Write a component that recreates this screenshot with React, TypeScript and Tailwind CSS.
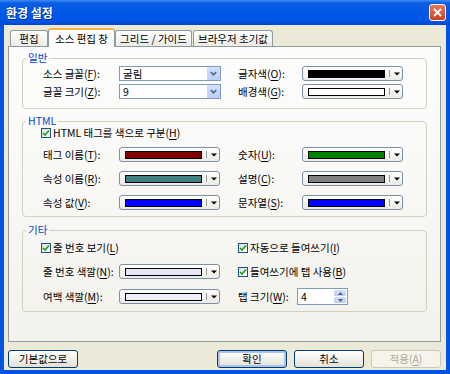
import React from "react";

const U = ({ children }: { children: React.ReactNode }) => (
  <span className="underline underline-offset-[1.5px]">{children}</span>
);

function CheckBox() {
  return (
    <span className="w-[10px] h-[10px] shrink-0 border border-[#1c5180] bg-linear-to-br from-[#dcdcd7] to-white flex items-center justify-center">
      <svg width="8" height="8" viewBox="0 0 8 8">
        <path d="M1 4 L3 6 L7 1.5" stroke="#21a121" strokeWidth="1.7" fill="none" />
      </svg>
    </span>
  );
}

function FontCombo({ value }: { value: string }) {
  return (
    <div className="w-[102px] h-[15px] shrink-0 border border-[#7f9db9] bg-white flex items-center">
      <span className="flex-1 pl-[3px] leading-[12px]">{value}</span>
      <span className="w-[13px] h-[13px] bg-linear-to-b from-[#d4e0fc] to-[#b9cdf8] rounded-[1px] flex items-center justify-center">
        <svg width="7" height="5" viewBox="0 0 7 5">
          <path d="M0.8 1 L3.5 3.8 L6.2 1" stroke="#4d6185" strokeWidth="1.6" fill="none" />
        </svg>
      </span>
    </div>
  );
}

function ColorCombo({ swatch }: { swatch: string }) {
  return (
    <div className="w-[101px] h-[15px] shrink-0 rounded-[3px] border border-[#7b8fa8] bg-linear-to-b from-white to-[#ecebe6] flex items-center pl-[5px]">
      <span className={"w-[77px] h-[8px] border border-black " + swatch} />
      <span className="ml-[4px] w-px h-[7px] bg-[#9a9a9a]" />
      <svg className="ml-[4px]" width="6" height="4" viewBox="0 0 6 4">
        <path d="M0 0.5H6L3 3.5Z" fill="#000" />
      </svg>
    </div>
  );
}

function Spinner() {
  return (
    <div className="w-[51px] h-[17px] shrink-0 border border-[#7f9db9] bg-white flex">
      <span className="flex-1 pl-[3px] flex items-center">4</span>
      <div className="w-[14px] flex flex-col gap-px p-px">
        <span className="flex-1 rounded-[1px] bg-linear-to-b from-[#d4e0fc] to-[#b9cdf8] flex items-center justify-center">
          <svg width="5" height="3" viewBox="0 0 5 3">
            <path d="M0 3H5L2.5 0Z" fill="#4d6185" />
          </svg>
        </span>
        <span className="flex-1 rounded-[1px] bg-linear-to-b from-[#d4e0fc] to-[#b9cdf8] flex items-center justify-center">
          <svg width="5" height="3" viewBox="0 0 5 3">
            <path d="M0 0H5L2.5 3Z" fill="#4d6185" />
          </svg>
        </span>
      </div>
    </div>
  );
}

function Btn({
  children,
  kind,
}: {
  children: React.ReactNode;
  kind?: "default" | "disabled";
}) {
  if (kind === "disabled") {
    return (
      <div className="w-[70px] h-[18px] rounded-[3px] border border-[#c9c7ba] bg-[#f5f4ea] text-[#aca899] flex items-center justify-center">
        {children}
      </div>
    );
  }
  return (
    <div
      className={
        "w-[70px] h-[18px] rounded-[3px] border border-[#003c74] bg-linear-to-b from-white to-[#e3e1d6] flex items-center justify-center " +
        (kind === "default" ? "shadow-[inset_0_0_0_2px_#a9c3ef]" : "")
      }
    >
      {children}
    </div>
  );
}

export default function App() {
  return (
    <div className="w-[450px] h-[374px] bg-[#0054e3] flex flex-col font-['Noto_Sans_CJK_KR','Noto_Sans',sans-serif] text-[10.5px] leading-[12px] text-black overflow-hidden">
      {/* title bar */}
      <div className="h-[25px] shrink-0 flex items-center justify-between pl-[6px] pr-[4px] bg-[linear-gradient(180deg,#3d8bf5_0%,#0b5ee0_12%,#0058e8_50%,#0054e6_85%,#0047cc_100%)]">
        <span className="text-white font-bold text-[12px] leading-[14px] [text-shadow:1px_1px_0_#0a2f9a]">
          환경 설정
        </span>
        <div className="w-[17px] h-[17px] rounded-[3px] border border-white bg-linear-to-b from-[#e8785a] to-[#c8401f] flex items-center justify-center">
          <svg width="9" height="9" viewBox="0 0 9 9">
            <path d="M1 1 L8 8 M8 1 L1 8" stroke="#fff" strokeWidth="1.8" />
          </svg>
        </div>
      </div>

      {/* body */}
      <div className="flex-1 mx-[4px] mb-[4px] bg-[#ece9d8] flex flex-col pl-[4px] pr-[5px] pt-[3px] pb-[2px]">
        {/* tabs */}
        <div className="flex items-end h-[19px] -mb-px pl-[2px] relative z-10">
          <div className="w-[38px] h-[16px] mb-px border border-b-0 border-[#919b9c] rounded-t-[3px] bg-linear-to-b from-white to-[#ecebe5] flex items-center justify-center">
            편집
          </div>
          <div className="w-[67px] h-[19px] border-x border-[#919b9c] border-t-2 border-t-[#f8b33a] rounded-t-[3px] bg-[#fdfdfd] flex items-center justify-center">
            소스 편집 창
          </div>
          <div className="w-[77px] h-[16px] mb-px border border-b-0 border-[#919b9c] rounded-t-[3px] bg-linear-to-b from-white to-[#ecebe5] flex items-center justify-center">
            그리드 / 가이드
          </div>
          <div className="ml-px w-[80px] h-[16px] mb-px border border-b-0 border-[#919b9c] rounded-t-[3px] bg-linear-to-b from-white to-[#ecebe5] flex items-center justify-center">
            브라우저 초기값
          </div>
        </div>

        {/* panel */}
        <div className="flex-1 border border-[#919b9c] bg-linear-to-b from-[#fdfdfd] to-[#f3f2ec] px-[13px] flex flex-col">
          {/* 일반 */}
          <fieldset className="mt-[4px] border border-[#d0d0bf] rounded-[4px]">
            <legend className="ml-[3px] px-[2px] text-[#0046d5] leading-[14px]">일반</legend>
            <div className="pl-[18px] pb-[9px]">
              <div className="mt-px h-[15px] grid grid-cols-[181px_166px] gap-x-[16px]">
                <div className="flex items-center">
                  <span className="w-[78px] pl-[2px]">
                    소스 글꼴(<U>F</U>):
                  </span>
                  <FontCombo value="굴림" />
                </div>
                <div className="flex items-center">
                  <span className="w-[64px]">
                    글자색(<U>O</U>):
                  </span>
                  <ColorCombo swatch="bg-black" />
                </div>
              </div>
              <div className="mt-[3px] h-[15px] grid grid-cols-[181px_166px] gap-x-[16px]">
                <div className="flex items-center">
                  <span className="w-[78px] pl-[2px]">
                    글꼴 크기(<U>Z</U>):
                  </span>
                  <FontCombo value="9" />
                </div>
                <div className="flex items-center">
                  <span className="w-[64px]">
                    배경색(<U>G</U>):
                  </span>
                  <ColorCombo swatch="bg-white" />
                </div>
              </div>
            </div>
          </fieldset>

          {/* HTML */}
          <fieldset className="mt-[5px] border border-[#d0d0bf] rounded-[4px]">
            <legend className="ml-[3px] px-[2px] text-[#0046d5] leading-[14px]">HTML</legend>
            <div className="pl-[18px] pb-[6px]">
              <div className="-mt-px h-[12px] flex items-center gap-[2px]">
                <CheckBox />
                <span>
                  HTML 태그를 색으로 구분(<U>H</U>)
                </span>
              </div>
              <div className="mt-[8px] h-[15px] grid grid-cols-[181px_166px] gap-x-[16px]">
                <div className="flex items-center">
                  <span className="w-[78px] pl-[2px]">
                    태그 이름(<U>T</U>):
                  </span>
                  <ColorCombo swatch="bg-[#800000]" />
                </div>
                <div className="flex items-center">
                  <span className="w-[64px]">
                    숫자(<U>U</U>):
                  </span>
                  <ColorCombo swatch="bg-[#008000]" />
                </div>
              </div>
              <div className="mt-[9px] h-[15px] grid grid-cols-[181px_166px] gap-x-[16px]">
                <div className="flex items-center">
                  <span className="w-[78px] pl-[2px]">
                    속성 이름(<U>R</U>):
                  </span>
                  <ColorCombo swatch="bg-[#408080]" />
                </div>
                <div className="flex items-center">
                  <span className="w-[64px]">
                    설명(<U>C</U>):
                  </span>
                  <ColorCombo swatch="bg-[#808080]" />
                </div>
              </div>
              <div className="mt-[9px] h-[15px] grid grid-cols-[181px_166px] gap-x-[16px]">
                <div className="flex items-center">
                  <span className="w-[78px] pl-[2px]">
                    속성 값(<U>V</U>):
                  </span>
                  <ColorCombo swatch="bg-[#0000ff]" />
                </div>
                <div className="flex items-center">
                  <span className="w-[64px]">
                    문자열(<U>S</U>):
                  </span>
                  <ColorCombo swatch="bg-[#0000ff]" />
                </div>
              </div>
            </div>
          </fieldset>

          {/* 기타 */}
          <fieldset className="mt-[6px] border border-[#d0d0bf] rounded-[4px]">
            <legend className="ml-[3px] px-[2px] text-[#0046d5] leading-[14px]">기타</legend>
            <div className="pl-[18px] pb-[7px]">
              <div className="mt-[5px] h-[12px] grid grid-cols-[181px_166px] gap-x-[16px]">
                <div className="flex items-center gap-[2px]">
                  <CheckBox />
                  <span>
                    줄 번호 보기(<U>L</U>)
                  </span>
                </div>
                <div className="flex items-center gap-[2px]">
                  <CheckBox />
                  <span>
                    자동으로 들여쓰기(<U>I</U>)
                  </span>
                </div>
              </div>
              <div className="mt-[10px] h-[15px] grid grid-cols-[181px_166px] gap-x-[16px]">
                <div className="flex items-center">
                  <span className="w-[78px] pl-[2px] whitespace-nowrap">
                    줄 번호 색깔(<U>N</U>):
                  </span>
                  <ColorCombo swatch="bg-[#e6e6f4]" />
                </div>
                <div className="flex items-center gap-[2px]">
                  <CheckBox />
                  <span>
                    들여쓰기에 탭 사용(<U>B</U>)
                  </span>
                </div>
              </div>
              <div className="mt-[9px] h-[16px] grid grid-cols-[181px_166px] gap-x-[16px]">
                <div className="flex items-center">
                  <span className="w-[78px] pl-[2px]">
                    여백 색깔(<U>M</U>):
                  </span>
                  <ColorCombo swatch="bg-[#eeeefc]" />
                </div>
                <div className="flex items-center">
                  <span className="w-[59px]">
                    탭 크기(<U>W</U>):
                  </span>
                  <Spinner />
                </div>
              </div>
            </div>
          </fieldset>
        </div>

        {/* buttons */}
        <div className="mt-[8px] h-[18px] flex">
          <Btn>기본값으로</Btn>
          <div className="ml-auto flex gap-[7px]">
            <Btn kind="default">확인</Btn>
            <Btn>취소</Btn>
            <Btn kind="disabled">
              적용(<U>A</U>)
            </Btn>
          </div>
        </div>
      </div>
    </div>
  );
}
